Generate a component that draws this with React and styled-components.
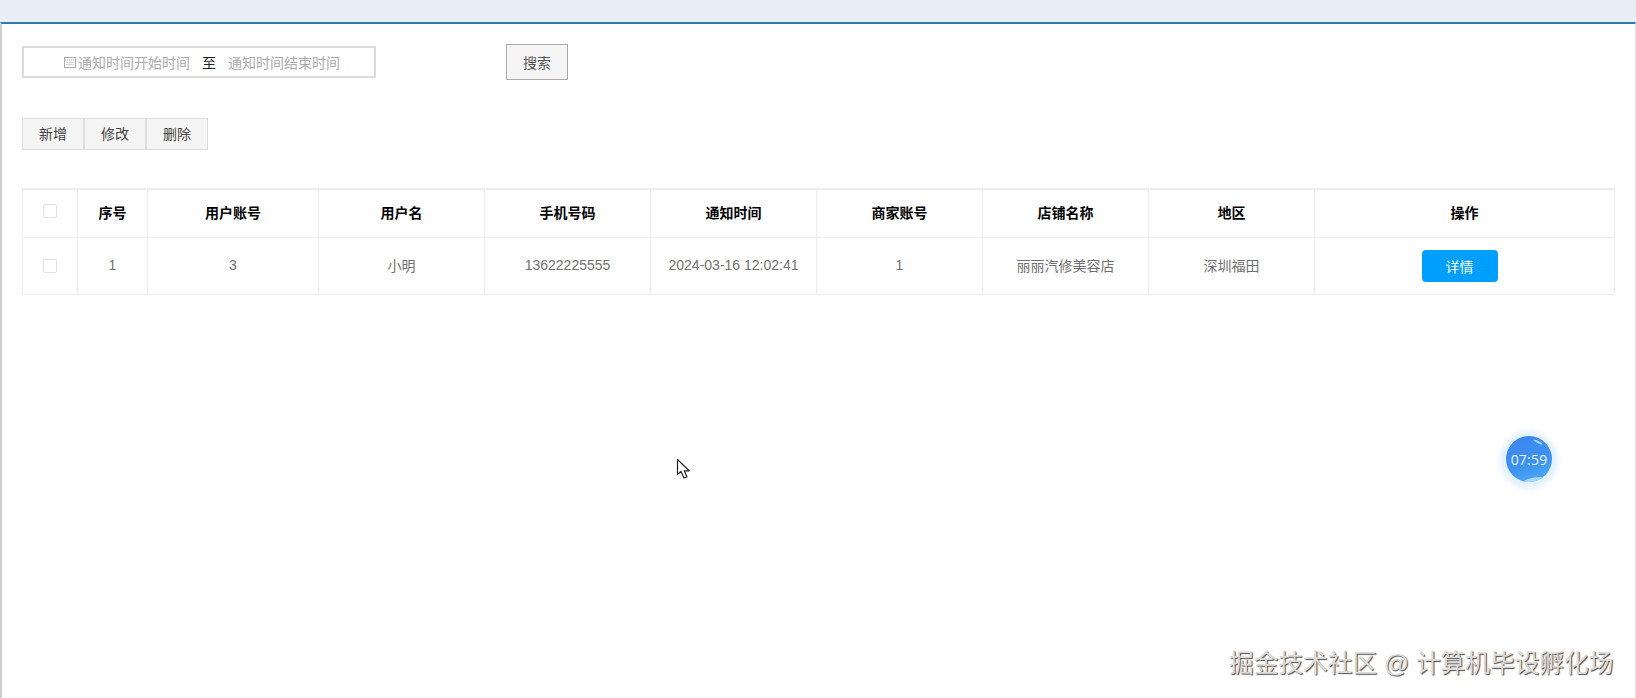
import React from 'react';
import styled, { createGlobalStyle } from 'styled-components';

const GlobalStyle = createGlobalStyle`
    html, body {
        margin: 0;
        padding: 0;
        height: 100%;
        overflow: hidden;
        background: #fff;
    }
    body {
        font-family: "Liberation Sans", "Noto Sans CJK SC", sans-serif;
        font-size: 14px;
    }
`;

const Page = styled.div`
    position: relative;
    display: flex;
    flex-direction: column;
    width: 1636px;
    height: 698px;
    overflow: hidden;
`;

const TopBand = styled.div`
    flex: 0 0 22px;
    background: #e9edf5;
`;

const Panel = styled.main`
    flex: 1;
    box-sizing: border-box;
    padding: 20px 0 0 20px;
    background: #fff;
    border-top: 2px solid #2f7ba8;
    border-left: 2px solid #cfcfcf;
    border-right: 1px solid #e4e4e4;
`;

const SearchRow = styled.div`
    display: flex;
    align-items: center;
    height: 36px;
`;

const DateRange = styled.div`
    box-sizing: border-box;
    display: flex;
    align-items: center;
    width: 354px;
    height: 32px;
    padding-left: 40px;
    border: 2px solid #dcdcdc;
    background: #fff;
`;

const Placeholder = styled.span`
    color: #aaa;
    white-space: nowrap;
`;

const CalendarIcon = styled.svg`
    width: 12px;
    height: 12px;
    margin-right: 2px;
    flex: none;
`;

const RangeSeparator = styled.span`
    margin: 0 12px;
    color: #222;
`;

const SearchButton = styled.button`
    box-sizing: border-box;
    width: 62px;
    height: 36px;
    margin-left: 130px;
    padding: 0;
    border: 1px solid #aaa;
    background: #f5f5f5;
    color: #555;
    font: inherit;
`;

const ActionRow = styled.div`
    display: flex;
    margin-top: 38px;
`;

const ActionButton = styled.button`
    box-sizing: border-box;
    width: 62px;
    height: 32px;
    padding: 0 0 2px;
    border: 1px solid #dedede;
    background: #f5f5f5;
    color: #444;
    font: inherit;
`;

const DataTable = styled.table`
    box-sizing: border-box;
    width: 1593px;
    margin-top: 38px;
    border-collapse: collapse;
    table-layout: fixed;
    border-top: 2px solid #ececec;
`;

const HeadCell = styled.th`
    height: 43px;
    padding: 0 0 4px;
    border: 1px solid #ececec;
    border-top: 0;
    color: #000;
    font-size: 14px;
    font-weight: 700;
    text-align: center;
`;

const BodyCell = styled.td`
    height: 54px;
    padding: 0 0 2px;
    border: 1px solid #ececec;
    color: #707070;
    text-align: center;
`;

const CheckBox = styled.span`
    display: inline-block;
    box-sizing: border-box;
    width: 14px;
    height: 14px;
    margin-bottom: ${(p) => (p.$head ? '2px' : '0')};
    vertical-align: middle;
    border: 1px solid #e2e2e2;
    border-radius: 2px;
    background: #fff;
`;

const DetailButton = styled.button`
    width: 76px;
    height: 32px;
    margin: 2px 10px 0 0;
    padding: 0;
    border: 0;
    border-radius: 4px;
    background: #009ffd;
    color: #fff;
    font: inherit;
    vertical-align: middle;
`;

const TimerHalo = styled.div`
    position: absolute;
    left: 1503px;
    top: 433px;
    padding: 3px;
    border-radius: 50%;
    background: #e4f2fd;
    box-shadow: 0 1px 6px 2px rgba(140, 195, 245, 0.3);
`;

const Timer = styled.div`
    position: relative;
    display: flex;
    align-items: center;
    justify-content: center;
    overflow: hidden;
    width: 46px;
    height: 46px;
    border-radius: 50%;
    background: linear-gradient(160deg, #3a84ee 0%, #3f93f0 60%, #4fb0f6 100%);
    color: #e8f4ff;
    font-family: "Open Sans", sans-serif;
    font-size: 14px;
    letter-spacing: 0.2px;

    &::before {
        content: "";
        position: absolute;
        right: 9px;
        top: 5px;
        width: 10px;
        height: 2px;
        border-radius: 50%;
        background: #a8d4fb;
        transform: rotate(28deg);
    }

    &::after {
        content: "";
        position: absolute;
        left: 16px;
        right: -8px;
        bottom: -10px;
        height: 15px;
        border-radius: 50%;
        background: #a5d8fb;
    }
`;

const TimerText = styled.span`
    position: relative;
    z-index: 1;
`;

const Cursor = styled.svg`
    position: absolute;
    left: 676px;
    top: 458px;
    width: 16px;
    height: 22px;
`;

const Watermark = styled.div`
    position: absolute;
    left: 1229px;
    top: 648px;
    color: #dcdcdc;
    font-size: 24.7px;
    line-height: 32px;
    white-space: nowrap;
    text-shadow: 1px 1px 1px #4a4a4a;
`;

const columns = [
    { label: null, width: 55 },
    { label: '序号', width: 70 },
    { label: '用户账号', width: 171 },
    { label: '用户名', width: 166 },
    { label: '手机号码', width: 166 },
    { label: '通知时间', width: 166 },
    { label: '商家账号', width: 166 },
    { label: '店铺名称', width: 166 },
    { label: '地区', width: 166 },
    { label: '操作', width: 300 },
];

const row = ['1', '3', '小明', '13622225555', '2024-03-16 12:02:41', '1', '丽丽汽修美容店', '深圳福田'];

const App = () => (
    <Page>
        <GlobalStyle />
        <TopBand />
        <Panel>
            <SearchRow>
                <DateRange>
                    <CalendarIcon viewBox="0 0 12 12" fill="none" stroke="#aaa" strokeWidth="1">
                        <rect x="0.5" y="1.5" width="11" height="10" />
                        <path d="M1 4h10M2.5 6.5h7M2.5 8.5h7" strokeDasharray="1 1" />
                    </CalendarIcon>
                    <Placeholder>通知时间开始时间</Placeholder>
                    <RangeSeparator>至</RangeSeparator>
                    <Placeholder>通知时间结束时间</Placeholder>
                </DateRange>
                <SearchButton>搜索</SearchButton>
            </SearchRow>
            <ActionRow>
                <ActionButton>新增</ActionButton>
                <ActionButton>修改</ActionButton>
                <ActionButton>删除</ActionButton>
            </ActionRow>
            <DataTable>
                <colgroup>
                    {columns.map((c, i) => <col key={i} width={c.width} />)}
                </colgroup>
                <thead>
                    <tr>
                        {columns.map((c, i) => (
                            <HeadCell key={i}>{c.label || <CheckBox $head />}</HeadCell>
                        ))}
                    </tr>
                </thead>
                <tbody>
                    <tr>
                        <BodyCell><CheckBox /></BodyCell>
                        {row.map((v, i) => <BodyCell key={i}>{v}</BodyCell>)}
                        <BodyCell><DetailButton>详情</DetailButton></BodyCell>
                    </tr>
                </tbody>
            </DataTable>
        </Panel>
        <TimerHalo>
            <Timer><TimerText>07:59</TimerText></Timer>
        </TimerHalo>
        <Cursor viewBox="0 0 16 22">
            <path d="M1.5 1.5V16.5L5 13.5L8 20L11 18.7L8.2 12.8H13.2Z" fill="#fff" stroke="#222" strokeWidth="1.2" strokeLinejoin="round" />
        </Cursor>
        <Watermark>掘金技术社区 @ 计算机毕设孵化场</Watermark>
    </Page>
);

export default App;
